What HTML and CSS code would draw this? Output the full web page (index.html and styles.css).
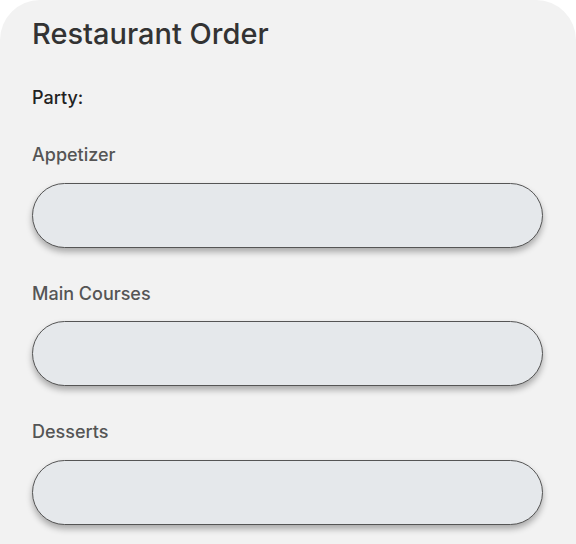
FILE: index.html
```html
<!DOCTYPE html>
<html>
<head>
<meta charset="utf-8">
<link rel="stylesheet" href="styles.css">
</head>
<body>
<div class="card">
  <h1 class="title">Restaurant Order</h1>
  <div class="party">Party:</div>
  <div class="field">
    <label class="label">Appetizer</label>
    <div class="input"></div>
  </div>
  <div class="field">
    <label class="label">Main Courses</label>
    <div class="input"></div>
  </div>
  <div class="field">
    <label class="label">Desserts</label>
    <div class="input"></div>
  </div>
</div>
</body>
</html>
```
FILE: styles.css
```css
html, body {
  margin: 0;
  padding: 0;
  background: #ffffff;
}
body {
  font-family: Inter, "Noto Sans", sans-serif;
}
.card {
  width: 576px;
  min-height: 560px;
  box-sizing: border-box;
  background: #f2f2f2;
  border-radius: 40px 40px 0 0;
  padding: 16px 33px 0 32px;
}
.title {
  margin: 0;
  font-size: 29px;
  line-height: 36px;
  font-weight: 500;
  color: #333333;
  letter-spacing: 0;
}
.party {
  margin-top: 34.5px;
  font-size: 18px;
  line-height: 22px;
  font-weight: 450;
  color: #222222;
}
.field {
  display: flex;
  flex-direction: column;
}
.label {
  margin-top: 35px;
  font-size: 18px;
  line-height: 22px;
  font-weight: 450;
  color: #555555;
}
.party + .field .label {
  margin-top: 35.5px;
}
.input {
  margin-top: 16.5px;
  height: 63px;
  background: #e5e8eb;
  border: 1px solid #555555;
  border-radius: 33px;
  box-shadow: 0 4px 6px rgba(0, 0, 0, 0.3);
}
```
